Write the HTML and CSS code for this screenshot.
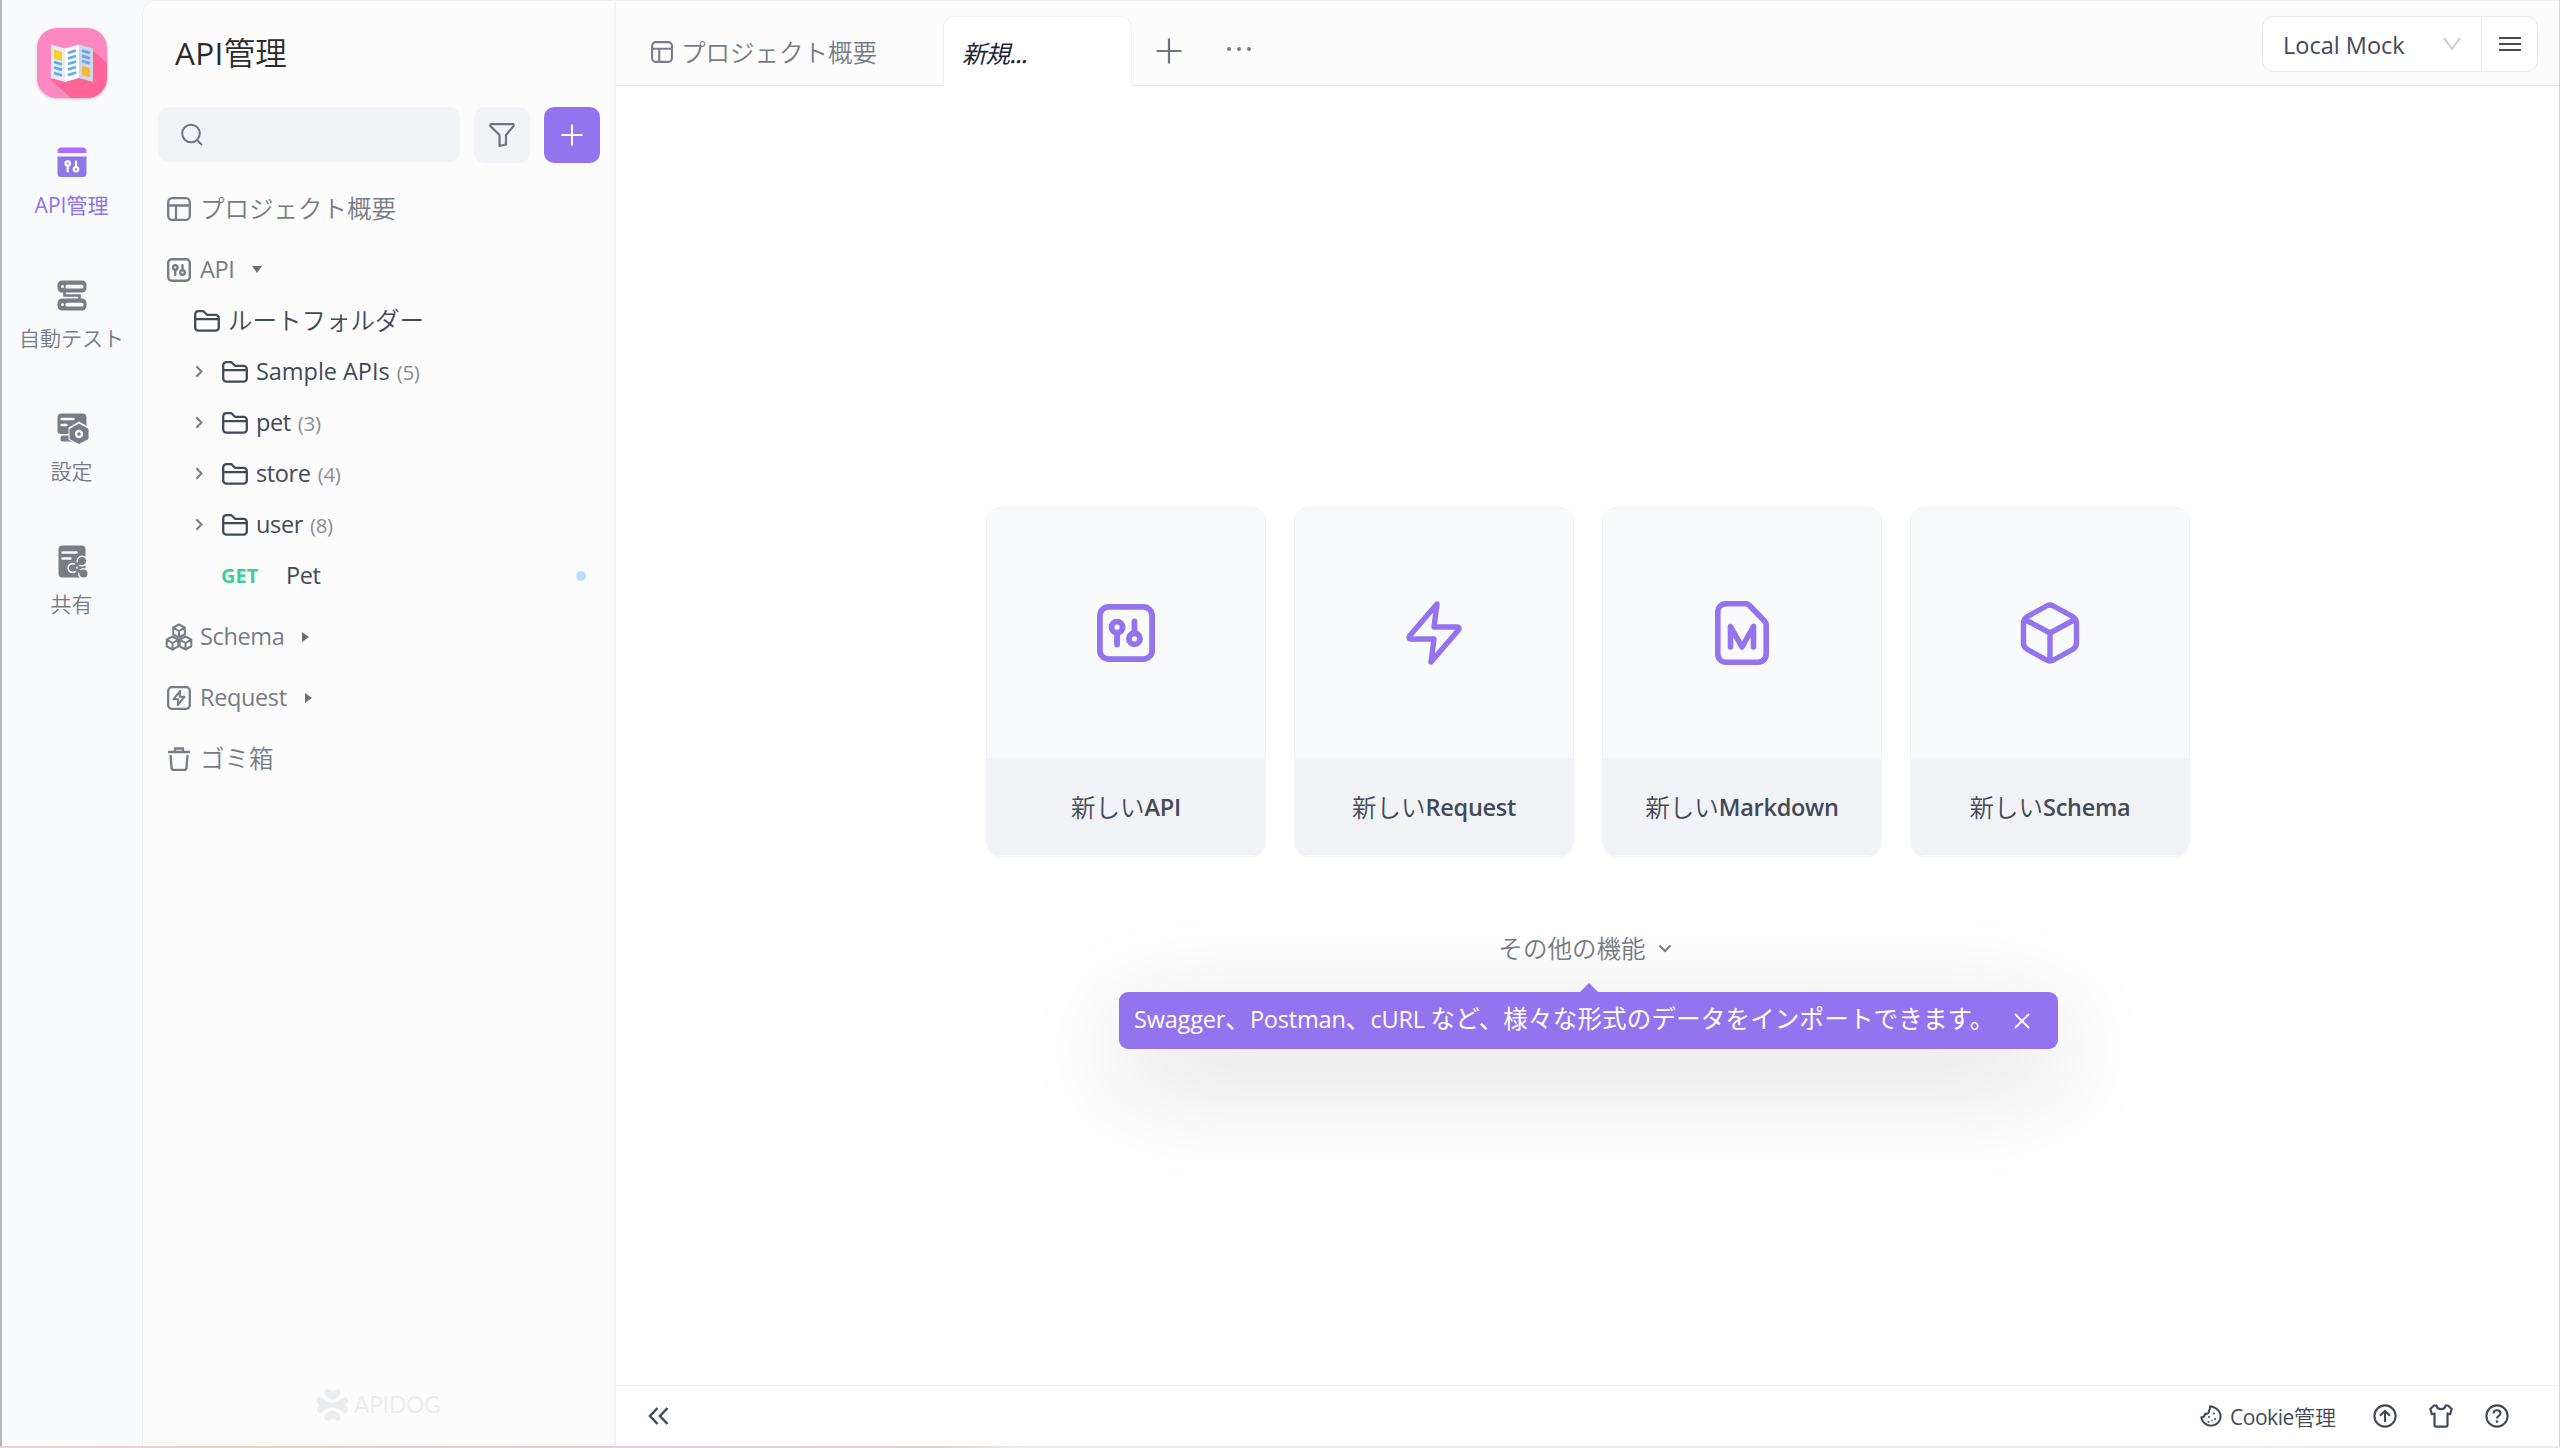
FILE: index.html
```html
<!DOCTYPE html>
<html lang="ja">
<head>
<meta charset="utf-8">
<title>API管理</title>
<link rel="stylesheet" href="styles.css">
</head>
<body>
<svg class="defs" width="0" height="0">
  <defs>
    <symbol id="layout" viewBox="0 0 24 24"><g fill="none" stroke="currentColor" stroke-width="2.3"><rect x="1.2" y="1.2" width="21.6" height="21.6" rx="4"/><path d="M1 8.500h22M9 8.500V23"/></g></symbol>
    <symbol id="api" viewBox="0 0 24 24"><rect x="1.2" y="1.2" width="21.6" height="21.6" rx="3.6" fill="none" stroke="currentColor" stroke-width="2.4"/><g fill="none" stroke="currentColor" stroke-width="2.4" stroke-linecap="round"><circle cx="8.3" cy="9.6" r="2.3"/><path d="M8.300 12v4.800M15.500 7.200V12"/><circle cx="15.5" cy="14.4" r="2.3"/></g></symbol>
    <symbol id="folder" viewBox="0 0 26 22"><path d="M1.200 17.500v-13A3.200 3.200 0 0 1 4.400 1.200h5l3.600 3.600h8.600a3.200 3.200 0 0 1 3.200 3.200v9.500a3.200 3.200 0 0 1-3.200 3.200H4.400a3.200 3.200 0 0 1-3.200-3.200zM1.200 9.200h23.600" fill="none" stroke="currentColor" stroke-width="2.3" stroke-linejoin="round"/></symbol>
    <symbol id="chev" viewBox="0 0 8 14"><path d="M1.200 1.400L6.600 7l-5.400 5.600" fill="none" stroke="currentColor" stroke-width="2.2"/></symbol>
  </defs>
</svg>
<div class="app">
  <nav class="rail">
    <svg class="logo" viewBox="0 0 70 70">
      <rect width="70" height="70" rx="20" fill="#fb88c0"/>
      <path d="M55.500 22L70 35v15a20 20 0 0 1-20 20H34L14 52z" fill="#ff6397"/>
      <path d="M14 16.500l14 4V54l-14-4z" fill="#e9ebf0"/>
      <path d="M28 20.500l14-4V50l-14 4z" fill="#fff"/><path d="M42 16.500l14 4V54l-14-4z" fill="#cfd6e4"/>
      <path d="M17 21.500l8 2.500v9l-8-2.500z" fill="#f6cf2c"/><path d="M45 38l8 2.300v9L45 47z" fill="#f5b736"/>
      <path d="M17 34l8 2.300M17 39.500l8 2.300M17 45l8 2.300M31 25l8-2.500M31 30.500l8-2.500M31 36l8-2.500M31 41.500l8-2.500M31 47l8-2.500M45 22.500l8 2.500M45 27.800l8 2.500M45 33l8 2.500" stroke="#5fa8f2" stroke-width="2.8"/>
    </svg>
    <a class="nav on"><svg viewBox="0 0 30 32"><path d="M.5 6V4.500a4 4 0 0 1 4-4h21a4 4 0 0 1 4 4V6z" fill="#b06bff"/><path d="M.5 9.500h29v17a3.500 3.500 0 0 1-3.500 3.500H4a3.500 3.500 0 0 1-3.500-3.500z" fill="#8e78e8"/><g fill="none" stroke="#fff" stroke-width="2.2" stroke-linecap="round"><circle cx="10.7" cy="16.5" r="2.2"/><path d="M10.700 19v5.500M19 14.500V20"/><circle cx="19" cy="22.3" r="2.2"/></g></svg><span>API管理</span></a>
    <a class="nav"><svg viewBox="0 0 30 32"><g fill="#787c85"><rect x=".5" y=".5" width="29" height="12" rx="4.5"/><rect x=".5" y="18.5" width="29" height="12" rx="4.5"/></g><path d="M7.500 12v3.500h15V19" fill="none" stroke="#787c85" stroke-width="2.6"/><g fill="#f9fafc"><circle cx="5.5" cy="6.5" r="1.5"/><rect x="8.5" y="4.8" width="18" height="3.6" rx="1.5"/><circle cx="5.5" cy="24.5" r="1.5"/><rect x="8.5" y="22.8" width="18" height="3.6" rx="1.5"/></g></svg><span>自動テスト</span></a>
    <a class="nav"><svg viewBox="0 0 30 32"><path d="M4.500.5h21a4 4 0 0 1 4 4V21h-26a3 3 0 0 1-3-3V4.500a4 4 0 0 1 4-4z" fill="#787c85"/><rect x="3.5" y="22.5" width="14" height="6" rx="2.5" fill="#787c85"/><path d="M4.500 6h12M4.500 12h5" stroke="#f9fafc" stroke-width="2.4" stroke-linecap="round"/><path d="M22 8.500l10.500 6v12L22 32.500l-10.500-6v-12z" fill="#f9fafc"/><path d="M22 11l9 5.200v9.600L22 30.500l-9-4.700v-9.600z" fill="#787c85" stroke="#787c85" stroke-linejoin="round"/><circle cx="22" cy="21" r="3" fill="#787c85" stroke="#f9fafc" stroke-width="2.4"/></svg><span>設定</span></a>
    <a class="nav"><svg viewBox="0 0 30 32"><rect x="1.5" y="-.5" width="27" height="32" rx="4" fill="#787c85"/><path d="M5.500 6.500h14M5.500 12.500h8" stroke="#f9fafc" stroke-width="2.4" stroke-linecap="round"/><g fill="#f9fafc"><circle cx="25" cy="15" r="5.5"/><circle cx="15.5" cy="22" r="5.2"/><circle cx="26.5" cy="27.500" r="5.5"/></g><path d="M24.500 15.500L15.500 22l10 5" stroke="#787c85" stroke-width="2.8" fill="none"/><g fill="#787c85"><circle cx="25" cy="15" r="4"/><circle cx="15.5" cy="22" r="3.5"/><circle cx="26.5" cy="27.5" r="4"/></g></svg><span>共有</span></a>
  </nav>

  <aside class="panel">
    <h1><span class="en">API</span>管理</h1>
    <div class="tools">
      <div class="search"><svg width="22" height="23" viewBox="0 0 22 23"><circle cx="10" cy="10.5" r="8.8" fill="none" stroke="#6f747e" stroke-width="2"/><path d="M16 17l5 5" stroke="#6f747e" stroke-width="2"/></svg></div>
      <div class="btn"><svg width="26" height="24" viewBox="0 0 26 24"><path d="M2 1.200h22q1.200 1 .3 2.200L17 12v9.500L10.500 23V12L1.700 3.400Q.8 2.200 2 1.200z" fill="none" stroke="#6f747e" stroke-width="2.2" stroke-linejoin="round"/></svg></div>
      <div class="btn add"><svg width="22" height="22" viewBox="0 0 22 22"><path d="M11 .5v21M.5 11h21" stroke="#fff" stroke-width="2"/></svg></div>
    </div>
    <div class="row main"><svg class="ic"><use href="#layout"/></svg><span class="jp">プロジェクト概要</span></div>
    <div class="row main"><svg class="ic"><use href="#api"/></svg><span class="en">API</span><i class="tri down"></i></div>
    <div class="row root"><svg class="fold"><use href="#folder"/></svg><span class="jp">ルートフォルダー</span></div>
    <div class="row sub"><svg class="chev"><use href="#chev"/></svg><svg class="fold"><use href="#folder"/></svg><span class="en loose">Sample APIs</span><small>(5)</small></div>
    <div class="row sub"><svg class="chev"><use href="#chev"/></svg><svg class="fold"><use href="#folder"/></svg><span class="en">pet</span><small>(3)</small></div>
    <div class="row sub"><svg class="chev"><use href="#chev"/></svg><svg class="fold"><use href="#folder"/></svg><span class="en">store</span><small>(4)</small></div>
    <div class="row sub"><svg class="chev"><use href="#chev"/></svg><svg class="fold"><use href="#folder"/></svg><span class="en">user</span><small>(8)</small></div>
    <div class="row leaf"><b>GET</b><span class="en">Pet</span><i class="dot"></i></div>
    <div class="row main"><svg class="ic wide" viewBox="0 0 28 28"><g fill="none" stroke="currentColor" stroke-width="2" stroke-linejoin="round"><path id="cb" d="M14 1.500l5.800 3.200v6.600L14 14.500l-5.800-3.200V4.700zM8.200 4.700L14 8l5.800-3.300M14 8v6.500"/><use href="#cb" x="-6.5" y="12"/><use href="#cb" x="6.5" y="12"/></g></svg><span class="en">Schema</span><i class="tri"></i></div>
    <div class="row main"><svg class="ic" viewBox="0 0 24 24"><g fill="none" stroke="currentColor" stroke-width="2.3" stroke-linejoin="round"><rect x="1.2" y="1.2" width="21.6" height="21.6" rx="3.6"/><path d="M13.200 5L6.500 13.200h4.800L10.800 19l6.700-8.200h-4.800z" stroke-width="2"/></g></svg><span class="en">Request</span><i class="tri"></i></div>
    <div class="row main"><svg class="ic" viewBox="0 0 24 24"><g fill="none" stroke="currentColor" stroke-width="2.3" stroke-linejoin="round"><path d="M1 5h22M8 5V1.500h8V5M3.500 8l1 13q.2 1.800 2 1.800h11q1.800 0 2-1.800l1-13"/></g></svg><span class="jp">ゴミ箱</span></div>
    <div class="brand"><svg width="33" height="32" viewBox="0 0 33 32"><g fill="#ebecee"><path d="M16.500 10.500C12 10 8 6 8.500 2.500 9.500-.8 14-.5 16.500 3 19-.5 23.500-.8 24.500 2.500 25 6 21 10 16.500 10.500z"/><path d="M16.500 21.500C12 22 8 26 8.500 29.500c1 3.300 5.500 3 8-.5 2.500 3.500 7 3.800 8 .5.500-3.500-3.500-7.500-8-8z"/><path d="M3 8c3-2 4.500 5.500 13.500 5.500S27 6 30 8c3 2.500 3 5-.5 8 3.500 3 3.500 5.500.5 8-3 2-4.500-5.500-13.500-5.500S6 26 3 24c-3-2.500-3-5 .5-8C0 13 0 10.500 3 8z"/></g></svg><span>APIDOG</span></div>
  </aside>

  <main class="main-area">
    <header class="top">
      <div class="tab"><svg class="tic"><use href="#layout"/></svg>プロジェクト概要</div>
      <div class="tab active">新規...</div>
      <svg class="plus" width="26" height="26" viewBox="0 0 26 26"><path d="M13 .5v25M.5 13h25" stroke="#6f747e" stroke-width="2.2"/></svg>
      <svg class="more" width="26" height="6" viewBox="0 0 26 6"><g fill="#787c85"><circle cx="3" cy="3" r="2"/><circle cx="13" cy="3" r="2"/><circle cx="23" cy="3" r="2"/></g></svg>
      <div class="env"><span class="en loose">Local Mock</span><svg class="dd" width="18" height="14" viewBox="0 0 18 14"><path d="M1 1l8 11 8-11" fill="none" stroke="#c3c5c9" stroke-width="1.6"/></svg><div class="menu"><svg width="22" height="16" viewBox="0 0 22 16"><path d="M0 2h22M0 8h22M0 14h22" stroke="#424957" stroke-width="2.2"/></svg></div></div>
    </header>
    <section class="stage">
      <div class="cards">
        <div class="card"><div class="pic"><svg width="58" height="58"><use href="#api"/></svg></div><div class="cap"><span>新しい</span><span class="en">API</span></div></div>
        <div class="card"><div class="pic"><svg width="56" height="64" viewBox="0 0 56 64"><path d="M31 3L3.500 35q-1.500 3 1.500 3h23L25 61l27.500-32q1.500-3-1.500-3H28z" fill="none" stroke="currentColor" stroke-width="5.4" stroke-linejoin="round"/></svg></div><div class="cap"><span>新しい</span><span class="en">Request</span></div></div>
        <div class="card"><div class="pic"><svg width="54" height="64" viewBox="0 0 54 64"><path d="M11 2.800h20q2 0 3.300 1.500L49.500 20q1.700 1.800 1.700 4v29a8 8 0 0 1-8 8.200H11A8 8 0 0 1 2.800 53V11A8 8 0 0 1 11 2.800z" fill="none" stroke="currentColor" stroke-width="5.6"/><path d="M15.500 46V25.500L27 46l11.500-20.500V46" fill="none" stroke="currentColor" stroke-width="5.600" stroke-linejoin="round" stroke-linecap="round"/></svg></div><div class="cap"><span>新しい</span><span class="en">Markdown</span></div></div>
        <div class="card"><div class="pic"><svg width="58" height="62" viewBox="0 0 58 62"><path d="M25.500 4q3.500-2 7 0l19 10.500q4 2.300 4 6.500v20q0 4.200-4 6.500l-19 10.500q-3.500 2-7 0l-19-10.500q-4-2.300-4-6.500V21q0-4.200 4-6.500zM4 17.500L29 31l25-13.500M29 31v27" fill="none" stroke="currentColor" stroke-width="5.4" stroke-linejoin="round"/></svg></div><div class="cap"><span>新しい</span><span class="en">Schema</span></div></div>
      </div>
      <div class="other"><span>その他の機能</span><svg width="14" height="9" viewBox="0 0 14 9"><path d="M1.500 1.500L7 7l5.500-5.500" fill="none" stroke="#787c85" stroke-width="2"/></svg>
        <div class="tip"><span class="msg"><span class="en">Swagger</span>、<span class="en">Postman</span>、<span class="en">cURL</span> など、様々な形式のデータをインポートできます。</span><svg width="16" height="16" viewBox="0 0 16 16"><path d="M1 1l14 14M15 1L1 15" stroke="#fff" stroke-width="1.8"/></svg></div>
      </div>
    </section>
    <footer class="foot">
      <svg width="22" height="18" viewBox="0 0 22 18"><path d="M9.500 1L2 9l7.500 8M19.500 1L12 9l7.500 8" fill="none" stroke="#424957" stroke-width="2.5"/></svg>
      <div class="fr">
        <svg width="22" height="22" viewBox="0 0 22 22"><path d="M10 1.200c1 0 9 1.500 10.500 8.500.8 6-3.500 11-9.500 11-5 0-9-3.500-9.700-8.500Q4.500 12.500 5 8.800q4 .5 4-3.300Q10.500 4 10 1.200z" fill="none" stroke="#424957" stroke-width="2" stroke-linejoin="round"/><g fill="#424957"><circle cx="9" cy="12" r="1"/><circle cx="14" cy="8.5" r="1"/><circle cx="15" cy="14" r="1"/><circle cx="8.5" cy="17" r="1"/><circle cx="12" cy="15.5" r=".8"/></g></svg>
        <span class="ck"><span class="en">Cookie</span>管理</span>
        <svg width="24" height="24" viewBox="0 0 24 24"><g fill="none" stroke="#424957" stroke-width="2.1"><circle cx="12" cy="12" r="10.6"/><path d="M12 18V7M7 11.800L12 7l5 4.800"/></g></svg>
        <svg width="24" height="24" viewBox="0 0 24 24"><path d="M7.500 1.500q.5 3.700 4.500 3.700t4.500-3.700h2.500l3.700 3.500-1.500 5.300-2.700-.8v11.500q0 1.600-1.600 1.600H7.100q-1.600 0-1.600-1.600V9.500l-2.700.8L1.300 5 5 1.500z" fill="none" stroke="#424957" stroke-width="2.2" stroke-linejoin="round"/></svg>
        <svg width="24" height="24" viewBox="0 0 24 24"><g fill="none" stroke="#424957" stroke-width="2.1"><circle cx="12" cy="12" r="10.6"/><path d="M8.500 9.500Q8.700 6.300 12 6.300t3.500 3q0 1.700-1.900 2.700-1.600.8-1.600 2.600"/></g><circle cx="12" cy="17.6" r="1.3" fill="#424957"/></svg>
      </div>
    </footer>
  </main>
</div>
</body>
</html>
```
FILE: styles.css
```css
* { box-sizing: border-box; }
body {
  margin: 0;
  width: 2560px;
  height: 1448px;
  overflow: hidden;
  background: linear-gradient(90deg, #e3d3d6, #e9d3c8 10%, #e2cfd8 25%, #e3d3d6 37%, #ececec 40%);
  color: #424957;
  font: 350 24.5px/1.2 "Noto Sans CJK JP", sans-serif;
}
.defs { position: absolute; }
svg { display: block; flex: none; overflow: visible; }
.en {
  font-family: "Open Sans", sans-serif;
  font-weight: 400;
  font-size: 0.96em;
  letter-spacing: -0.016em;
}
.en.loose { letter-spacing: -0.002em; }
.jp { padding-bottom: 1px; }
.app {
  display: flex;
  height: 1446px;
  background: #f9fafc;
  border-left: 2px solid #b4b5b9;
  border-right: 1px solid #d3d4d8;
}

.rail {
  width: 140px;
  display: flex;
  flex-direction: column;
  align-items: center;
  padding-top: 28px;
}
.logo {
  width: 70px;
  height: 70px;
  margin-bottom: 49px;
  border-radius: 20px;
  box-shadow: 0 1px 3px rgba(60, 30, 60, 0.25);
}
.nav {
  height: 133px;
  display: flex;
  flex-direction: column;
  align-items: center;
  color: #787c85;
  font-size: 21px;
  line-height: 28px;
}
.nav svg { width: 30px; height: 32px; margin: 0 1px 11px 0; }
.nav span { margin-right: 1px; }
.nav.on { color: #8e73ec; }
.nav.on svg { margin-bottom: 12px; }
.nav.on span { font-family: "Open Sans", "Noto Sans CJK JP", sans-serif; font-weight: 400; }

.panel {
  width: 472px;
  display: flex;
  flex-direction: column;
  background: #fcfcfc;
  border: solid #f0f1f5;
  border-width: 1px 0 0 1px;
  border-top-left-radius: 14px;
}
.panel h1 {
  margin: 0;
  padding: 30px 0 0 32px;
  height: 106px;
  font-size: 31.5px;
  font-weight: 350;
  line-height: 40px;
  color: #2b2b2b;
}
.panel h1 .en { font-size: 1em; letter-spacing: 0.01em; }
.tools { display: flex; gap: 14px; padding-left: 15px; margin-bottom: 15px; }
.search {
  width: 302px;
  height: 55px;
  padding-left: 23px;
  display: flex;
  align-items: center;
  background: #f2f3f7;
  border-radius: 10px;
}
.btn {
  width: 56px;
  height: 56px;
  display: flex;
  align-items: center;
  justify-content: center;
  background: #f2f3f7;
  border-radius: 10px;
}
.btn.add { background: #9373ee; }
.row { height: 51px; display: flex; align-items: center; white-space: nowrap; }
.row.main { height: 61px; padding-left: 24px; color: #787c85; }
.ic { width: 24px; height: 24px; margin-right: 9px; }
.ic.wide { width: 28px; height: 28px; margin: 0 7px 0 -2px; }
.tri {
  margin-left: 18px;
  border: solid transparent;
  border-width: 5px 0 5px 7px;
  border-left-color: #6b6f79;
}
.tri.down { border-width: 7px 5px 0; border-color: #6b6f79 transparent; }
.root { padding-left: 51px; margin-top: -5px; }
.fold { width: 26px; height: 22px; margin-right: 8px; }
.sub { padding-left: 52px; }
.chev { width: 8px; height: 13px; margin-right: 19px; color: #787c85; }
.sub small {
  margin-left: 7px;
  font: 400 20.5px "Open Sans", sans-serif;
  letter-spacing: -0.3px;
  color: #8a8e96;
}
.leaf { padding: 0 28px 0 78px; margin-bottom: 5px; }
.leaf b {
  width: 65px;
  font: 700 20px "Open Sans", sans-serif;
  color: #42cc9b;
}
.dot { width: 10px; height: 10px; margin-left: auto; border-radius: 50%; background: #b9dcff; }
.brand {
  margin-top: auto;
  margin-bottom: 25px;
  padding-left: 173px;
  display: flex;
  align-items: center;
  gap: 5px;
  font: 400 22.5px/32px Lato, sans-serif;
  color: #ebecee;
}

.main-area {
  flex: 1;
  display: flex;
  flex-direction: column;
  background: #fff;
  border-left: 2px solid #f2f3f7;
}
.top {
  height: 86px;
  display: flex;
  background: #fcfcfc;
  border-top: 1px solid #f0f1f5;
  border-bottom: 1px solid #ebecf0;
}
.tab {
  width: 327px;
  padding: 2px 0 0 35px;
  margin-top: 15px;
  display: flex;
  align-items: center;
  color: #787c85;
}
.tic { width: 22px; height: 22px; margin-right: 8px; }
.tab.active {
  width: 189px;
  margin-bottom: -1px;
  padding-left: 18px;
  font-style: italic;
  font-weight: 400;
  letter-spacing: -1px;
  color: #1d2533;
  background: #fff;
  border: 1px solid #f0f1f5;
  border-bottom: 0;
  border-radius: 12px 12px 0 0;
}
.plus { margin: 37px 0 0 24px; }
.more { margin: 45px 0 0 44px; }
.env {
  margin: 15px 21px 0 auto;
  width: 276px;
  height: 56px;
  padding-left: 20px;
  display: flex;
  align-items: center;
  background: #fff;
  border: 1px solid #e9eaee;
  border-radius: 11px;
}
.env .en { padding-top: 2px; letter-spacing: 0; }
.env .dd { margin-left: auto; }
.menu {
  width: 56px;
  height: 54px;
  margin-left: 20px;
  display: flex;
  align-items: center;
  justify-content: center;
  border-left: 1px solid #e9eaee;
}
.stage {
  flex: 1;
  padding-top: 421px;
  display: flex;
  flex-direction: column;
  align-items: center;
}
.cards { display: flex; gap: 28px; padding-left: 1px; }
.card {
  width: 280px;
  height: 350px;
  padding-bottom: 1px;
  display: flex;
  flex-direction: column;
  border: 1px solid #f2f3f7;
  border-radius: 14px;
  overflow: hidden;
}
.pic {
  height: 250px;
  display: flex;
  align-items: center;
  justify-content: center;
  background: #f9fafc;
  color: #9373ee;
}
.cap {
  flex: 1;
  display: flex;
  align-items: center;
  justify-content: center;
  background: #f2f3f7;
  border-radius: 0 0 12px 12px;
}
.cap .en { font-weight: 600; letter-spacing: -0.012em; padding-top: 1px; }
.other {
  position: relative;
  margin: 74px 5px 0 0;
  width: 173px;
  height: 34px;
  display: flex;
  align-items: center;
  justify-content: space-between;
  color: #787c85;
}
.tip {
  position: absolute;
  top: 61px;
  left: 50%;
  margin-left: -466px;
  width: 939px;
  height: 57px;
  padding: 0 28px 5px 15px;
  display: flex;
  align-items: center;
  justify-content: space-between;
  white-space: nowrap;
  font-weight: 400;
  letter-spacing: 0.18px;
  color: #fff;
  background: #9373ee;
  border-radius: 9px;
  box-shadow: 0 28px 105px rgba(0, 0, 0, 0.16);
}
.tip .en { letter-spacing: -0.008em; }
.tip::before {
  content: "";
  position: absolute;
  top: -9px;
  left: 461px;
  border: solid transparent;
  border-width: 0 9px 9px;
  border-bottom-color: #9373ee;
}
.tip svg { margin-top: 5px; }
.foot {
  height: 61px;
  padding: 0 50px 0 32px;
  display: flex;
  align-items: center;
  justify-content: space-between;
  border-top: 1px solid #f0f1f5;
}
.fr { display: flex; align-items: center; gap: 32px; }
.ck { font-size: 21px; margin: 3px 5px 0 -24px; }
.ck .en { font-size: 1em; letter-spacing: -0.02em; }
```
